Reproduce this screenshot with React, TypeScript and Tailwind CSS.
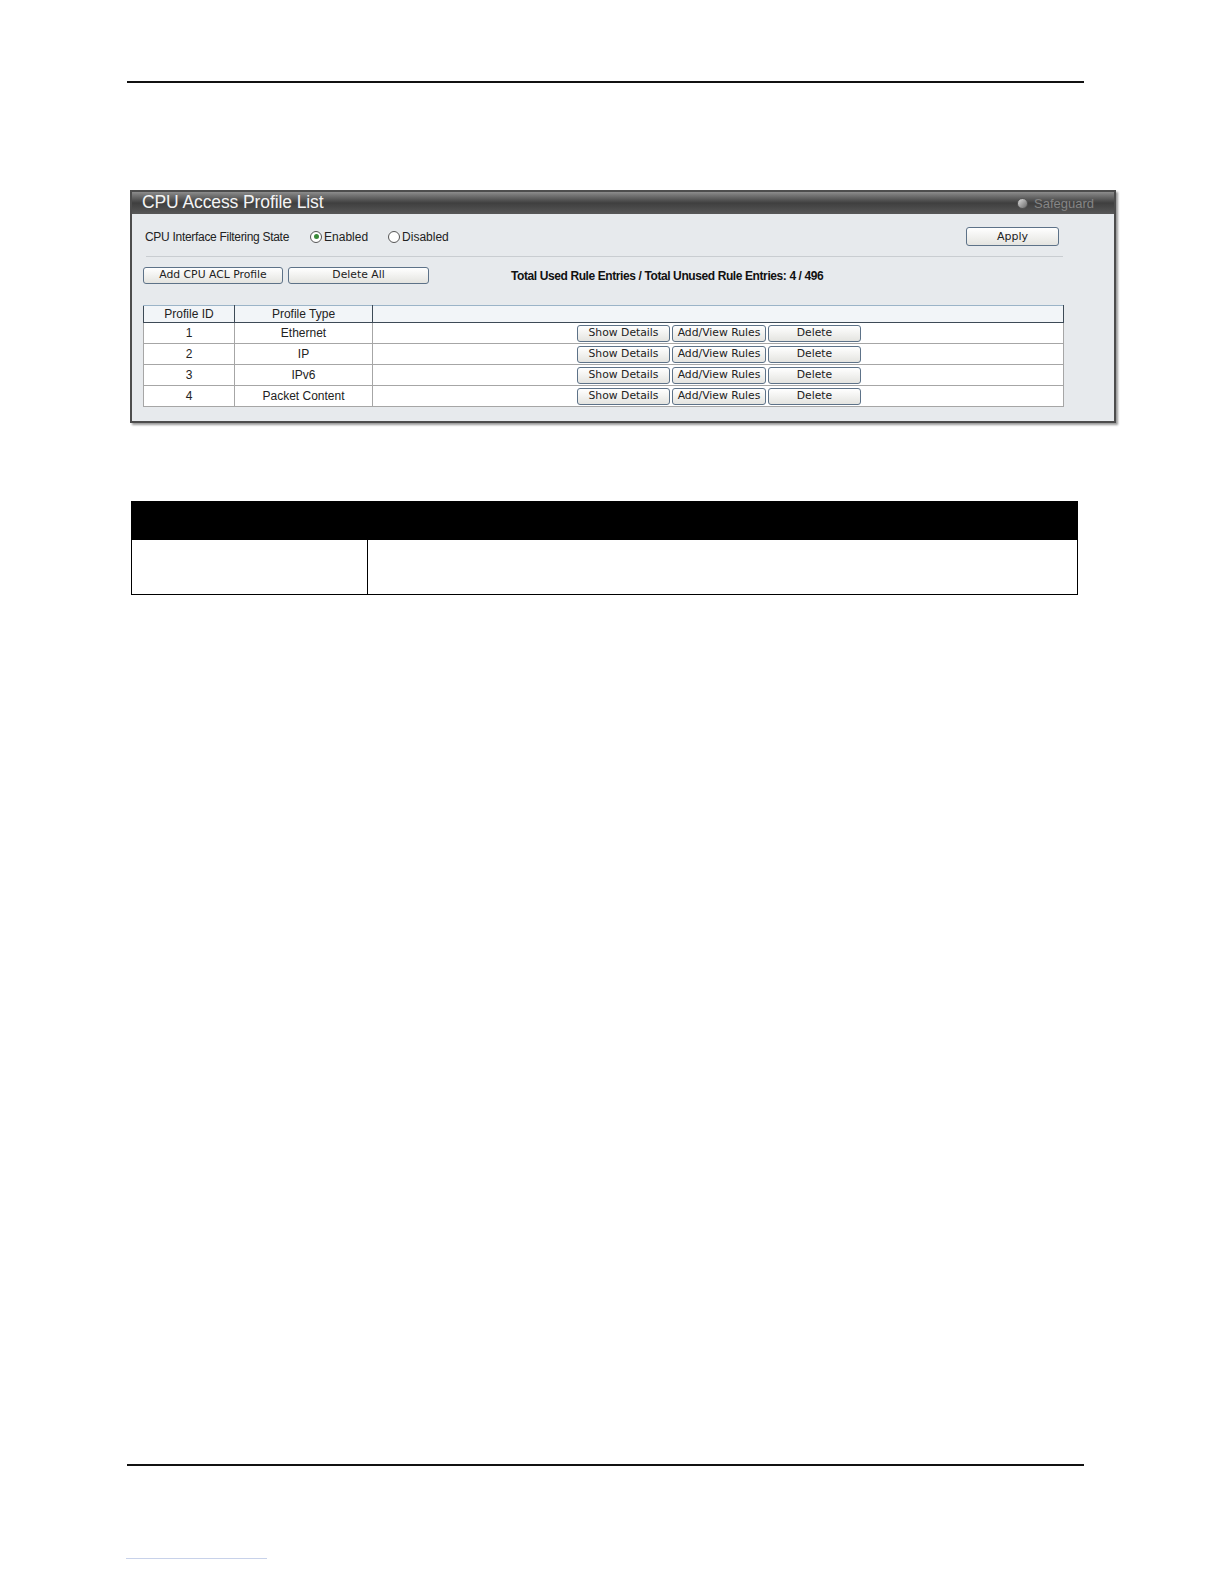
import React from 'react'

// CPU Access Profile List — manual page screenshot

const rows = [
  { id: '1', type: 'Ethernet' },
  { id: '2', type: 'IP' },
  { id: '3', type: 'IPv6' },
  { id: '4', type: 'Packet Content' },
]

const arial = { fontFamily: '"Liberation Sans", Arial, sans-serif' }
const verdana = { fontFamily: '"DejaVu Sans", Verdana, sans-serif' }

function Btn({ label, className = '' }: { label: string; className?: string }) {
  return (
    <button
      style={verdana}
      className={`h-[17px] rounded-[3px] border border-[#5d7288] bg-gradient-to-b from-[#ffffff] to-[#e4e4e0] text-[10.8px] leading-none text-[#222] flex items-center justify-center ${className}`}
    >
      {label}
    </button>
  )
}

function Radio({ checked, label }: { checked?: boolean; label: string }) {
  return (
    <span className="flex items-center gap-[2px]">
      <span className="w-[12px] h-[12px] rounded-full border border-[#555] bg-white flex items-center justify-center">
        {checked && <span className="w-[5px] h-[5px] rounded-full bg-[#3a8a3a]" />}
      </span>
      <span>{label}</span>
    </span>
  )
}

export default function App() {
  return (
    <div className="w-full h-screen overflow-hidden bg-white relative" style={arial}>
      <div className="pt-[81px] pl-[127px]">
        <div className="w-[957px] h-[2px] bg-[#111]" />
      </div>

      {/* Panel */}
      <div className="ml-[130px] mt-[107px] w-[986px] border-2 border-[#4d4d4d] shadow-[2px_2px_2px_#9a9a9a] bg-[#e7eaed]">
        <div className="h-[22px] bg-gradient-to-b from-[#8c8c8c] via-[#3f3f3f] to-[#585858] flex items-center justify-between pl-[10px] pr-[20px]">
          <span className="text-[#f4f4f4] text-[17.5px] leading-none tracking-[-0.1px]">CPU Access Profile List</span>
          <span className="flex items-center gap-[6px]">
            <span className="w-[11px] h-[11px] rounded-full bg-gradient-to-br from-[#ddd] to-[#6a6a6a] border border-[#555]" />
            <span className="text-[#858585] text-[13px] leading-none">Safeguard</span>
          </span>
        </div>

        <div className="px-[11px] pt-[13px] pb-[14px]">
          <div className="flex items-center justify-between h-[19px]">
            <div className="flex items-center text-[12px] text-[#222] pl-[2px]">
              <span className="tracking-[-0.3px]">CPU Interface Filtering State</span>
              <span className="ml-[21px]"><Radio checked label="Enabled" /></span>
              <span className="ml-[20px]"><Radio label="Disabled" /></span>
            </div>
            <Btn label="Apply" className="w-[93px] h-[19px] mr-[44px] text-[11px]" />
          </div>

          <div className="mt-[10px] ml-[3px] w-[917px] h-px bg-[#c9cdd1]" />

          <div className="mt-[10px] flex items-center h-[17px]">
            <Btn label="Add CPU ACL Profile" className="w-[140px]" />
            <Btn label="Delete All" className="w-[141px] ml-[5px]" />
            <span className="ml-[82px] text-[12px] font-bold text-[#111] tracking-[-0.4px]">
              Total Used Rule Entries / Total Unused Rule Entries: 4 / 496
            </span>
          </div>

          <table className="mt-[21px] w-[921px] border-collapse text-[12px] text-[#222]">
            <thead>
              <tr className="h-[17px] bg-[#f2f5f8]">
                <th className="w-[91px] font-normal border border-[#3d4a56] border-t-[#9bb4c8] leading-none">Profile ID</th>
                <th className="w-[138px] font-normal border border-[#3d4a56] border-t-[#9bb4c8] leading-none">Profile Type</th>
                <th className="border border-[#3d4a56] border-t-[#9bb4c8]" />
              </tr>
            </thead>
            <tbody className="bg-white">
              {rows.map(r => (
                <tr key={r.id} className="h-[21px]">
                  <td className="text-center border border-[#a6a6a6] leading-none">{r.id}</td>
                  <td className="text-center border border-[#a6a6a6] leading-none">{r.type}</td>
                  <td className="border border-[#a6a6a6] py-0">
                    <div className="flex items-center gap-[2px] pl-[204px]">
                      <Btn label="Show Details" className="w-[93px]" />
                      <Btn label="Add/View Rules" className="w-[94px]" />
                      <Btn label="Delete" className="w-[93px]" />
                    </div>
                  </td>
                </tr>
              ))}
            </tbody>
          </table>
        </div>
      </div>

      {/* Description table */}
      <div className="ml-[131px] mt-[78px] w-[947px]">
        <div className="h-[39px] bg-black" />
        <div className="flex h-[55px] border-x border-b border-black">
          <div className="w-[236px] border-r border-black" />
          <div className="flex-1" />
        </div>
      </div>

      <div className="absolute left-[127px] top-[1464px] w-[957px] h-[2px] bg-[#111]" />
      <div className="absolute left-[126px] top-[1558px] w-[141px] h-px bg-[#c8d2ea]" />
    </div>
  )
}
